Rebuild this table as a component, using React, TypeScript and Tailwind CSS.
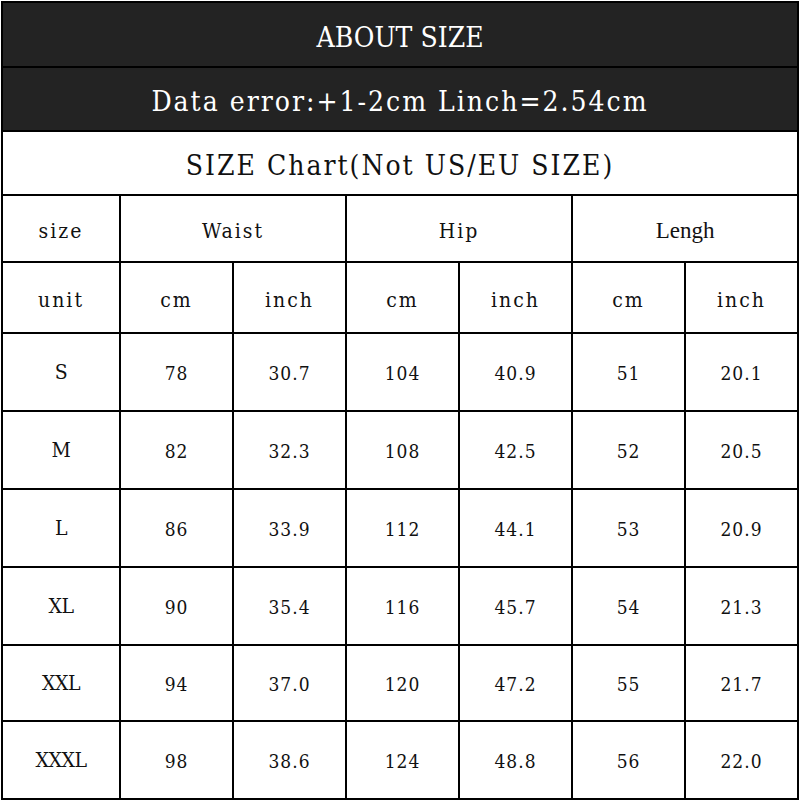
const rows = [
  { size: 'S', w: ['78', '30.7'], h: ['104', '40.9'], l: ['51', '20.1'] },
  { size: 'M', w: ['82', '32.3'], h: ['108', '42.5'], l: ['52', '20.5'] },
  { size: 'L', w: ['86', '33.9'], h: ['112', '44.1'], l: ['53', '20.9'] },
  { size: 'XL', w: ['90', '35.4'], h: ['116', '45.7'], l: ['54', '21.3'] },
  { size: 'XXL', w: ['94', '37.0'], h: ['120', '47.2'], l: ['55', '21.7'] },
  { size: 'XXXL', w: ['98', '38.6'], h: ['124', '48.8'], l: ['56', '22.0'] },
];

const rowHeights = ['h-[78px]', 'h-[78px]', 'h-[78px]', 'h-[78px]', 'h-[76px]', 'h-[78px]'];

// condensed serif is the closest thing to the SimSun look of the original
const serif = "font-['DejaVu_Serif_Condensed','DejaVu_Serif',serif]";

export default function App() {
  const cell = 'border-2 border-black text-center align-middle';
  const big = `${serif} text-[28px] pt-[6px]`;
  const head = `${serif} text-[21px] tracking-[2px] text-[#111] pt-[6px]`;
  const sz = `${serif} text-[21px] tracking-[-0.5px] text-[#111] pt-[2px]`;
  const num = `${serif} text-[19px] tracking-[1px] text-[#111] pt-[2px]`;

  return (
    <div className="w-[800px] h-[800px] bg-white pt-px pl-px">
      <table className="border-collapse table-fixed w-[798px]">
        <colgroup>
          <col className="w-[118px]" />
          <col className="w-[113px]" />
          <col className="w-[113px]" />
          <col className="w-[113px]" />
          <col className="w-[113px]" />
          <col className="w-[113px]" />
          <col className="w-[113px]" />
        </colgroup>
        <tbody>
          <tr className="h-[65px] bg-[#232323]">
            <td colSpan={7} className={`${cell} ${big} text-white`}>ABOUT SIZE</td>
          </tr>
          <tr className="h-[64px] bg-[#232323]">
            <td colSpan={7} className={`${cell} ${big} tracking-[2px] text-white`}>Data error:+1-2cm Linch=2.54cm</td>
          </tr>
          <tr className="h-[64px]">
            <td colSpan={7} className={`${cell} ${big} tracking-[2px] text-[#111]`}>SIZE Chart(Not US/EU SIZE)</td>
          </tr>
          <tr className="h-[67px]">
            <td className={`${cell} ${head}`}>size</td>
            <td colSpan={2} className={`${cell} ${head}`}>Waist</td>
            <td colSpan={2} className={`${cell} ${head}`}>Hip</td>
            <td colSpan={2} className={`${cell} font-['Liberation_Serif',serif] text-[23px] text-[#111] pt-[6px]`}>Lengh</td>
          </tr>
          <tr className="h-[71px]">
            <td className={`${cell} ${head}`}>unit</td>
            <td className={`${cell} ${head}`}>cm</td>
            <td className={`${cell} ${head}`}>inch</td>
            <td className={`${cell} ${head}`}>cm</td>
            <td className={`${cell} ${head}`}>inch</td>
            <td className={`${cell} ${head}`}>cm</td>
            <td className={`${cell} ${head}`}>inch</td>
          </tr>
          {rows.map((r, i) => (
            <tr key={r.size} className={rowHeights[i]}>
              <td className={`${cell} ${sz}`}>{r.size}</td>
              <td className={`${cell} ${num}`}>{r.w[0]}</td>
              <td className={`${cell} ${num}`}>{r.w[1]}</td>
              <td className={`${cell} ${num}`}>{r.h[0]}</td>
              <td className={`${cell} ${num}`}>{r.h[1]}</td>
              <td className={`${cell} ${num}`}>{r.l[0]}</td>
              <td className={`${cell} ${num}`}>{r.l[1]}</td>
            </tr>
          ))}
        </tbody>
      </table>
    </div>
  );
}
